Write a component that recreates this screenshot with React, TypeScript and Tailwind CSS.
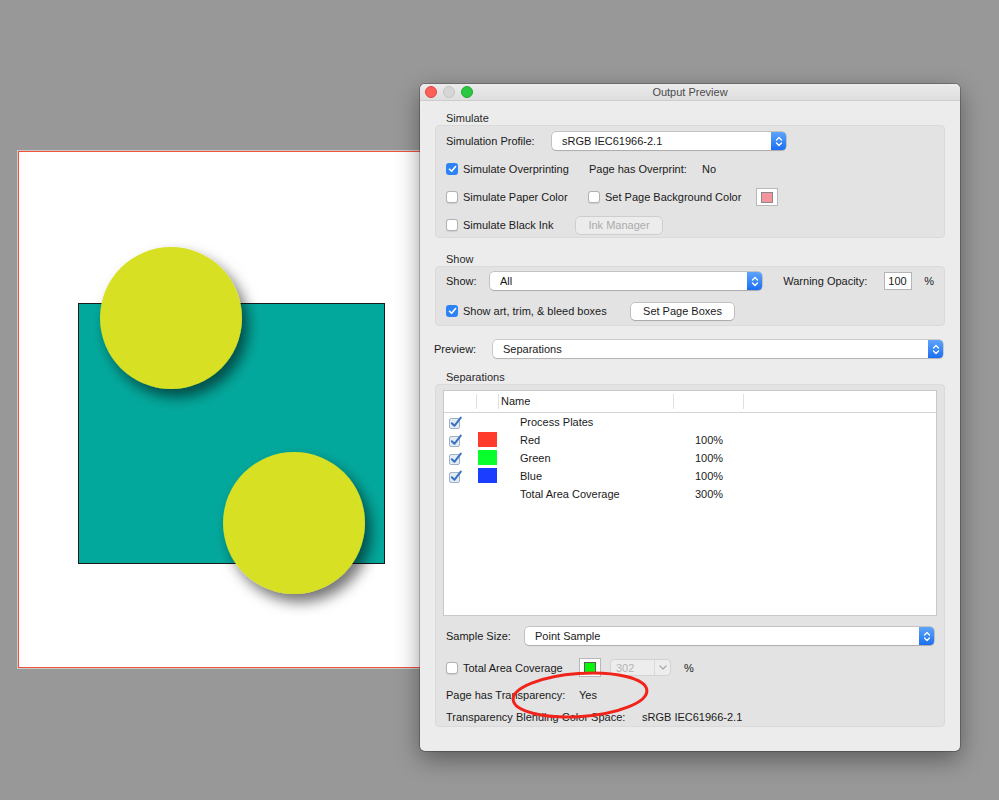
const Stepper = () => (
  <div className="flex w-[15px] shrink-0 items-center justify-center rounded-r-[4px] bg-linear-to-b from-[#5ea4fb] to-[#1a6ef3]">
    <svg width="8" height="11" viewBox="0 0 8 11" fill="none" stroke="white" strokeWidth="1.3" strokeLinecap="round" strokeLinejoin="round">
      <path d="M1.5 4 4 1.5 6.5 4M1.5 7 4 9.5 6.5 7" />
    </svg>
  </div>
);

function Select({ value, className = "" }: { value: string; className?: string }) {
  return (
    <div className={`flex h-[18px] items-stretch rounded-[4px] bg-white shadow-[0_0_0_0.5px_rgba(0,0,0,0.28),0_1px_1px_rgba(0,0,0,0.12)] ${className}`}>
      <span className="flex-1 pl-[10px] leading-[18px] text-[#1a1a1a]">{value}</span>
      <Stepper />
    </div>
  );
}

function Check({ on = false }: { on?: boolean }) {
  if (on)
    return (
      <span className="flex h-[12px] w-[12px] shrink-0 items-center justify-center rounded-[3px] bg-[#2d82f6]">
        <svg width="9" height="8" viewBox="0 0 9 8" fill="none" stroke="white" strokeWidth="1.6" strokeLinecap="round" strokeLinejoin="round">
          <path d="M1.5 4.2 3.6 6.3 7.6 1.5" />
        </svg>
      </span>
    );
  return <span className="h-[12px] w-[12px] shrink-0 rounded-[3px] border border-[#b2b2b2] bg-white shadow-[0_0.5px_1px_rgba(0,0,0,0.1)]" />;
}

function CheckLabel({ on, label, className = "" }: { on?: boolean; label: string; className?: string }) {
  return (
    <div className={`flex shrink-0 items-center gap-[5px] ${className}`}>
      <Check on={on} />
      <span>{label}</span>
    </div>
  );
}

function Button({ label, disabled, className = "" }: { label: string; disabled?: boolean; className?: string }) {
  return (
    <div
      className={`flex h-[17px] shrink-0 items-center justify-center rounded-[4px] ${
        disabled
          ? "bg-[#ececec] text-[#ababab] shadow-[0_0_0_0.5px_rgba(0,0,0,0.18)]"
          : "bg-white text-[#1a1a1a] shadow-[0_0_0_0.5px_rgba(0,0,0,0.3),0_1px_1px_rgba(0,0,0,0.12)]"
      } ${className}`}
    >
      {label}
    </div>
  );
}

function Swatch({ color, className = "" }: { color: string; className?: string }) {
  return (
    <div className={`flex shrink-0 items-center justify-center border border-[#b8b8b8] bg-white ${className}`}>
      <span className="h-[11px] w-[12px] border border-[#8a8a8a]" style={{ background: color }} />
    </div>
  );
}

const TableCheck = () => (
  <svg width="14" height="13" viewBox="0 0 14 13" fill="none">
    <rect x="0.5" y="2.5" width="10" height="10" rx="1.5" fill="#e3ebf4" stroke="#9fb2c8" />
    <path d="M2.8 7.2 5.4 9.8 11.8 1.6" stroke="#3a72bf" strokeWidth="2" strokeLinecap="round" strokeLinejoin="round" />
  </svg>
);

const rows = [
  { name: "Process Plates", check: true },
  { name: "Red", check: true, color: "#ff3b2c", pct: "100%" },
  { name: "Green", check: true, color: "#08ff2c", pct: "100%" },
  { name: "Blue", check: true, color: "#1a3dff", pct: "100%" },
  { name: "Total Area Coverage", pct: "300%" },
];

function Artwork() {
  return (
    <svg width="420" height="516" viewBox="0 0 420 516">
      <defs>
        <filter id="sh" x="-30%" y="-30%" width="170%" height="170%">
          <feDropShadow dx="6" dy="8" stdDeviation="7" floodColor="#000" floodOpacity="0.55" />
        </filter>
      </defs>
      <rect x="59.5" y="151.5" width="306" height="260" fill="#03a89c" stroke="#1a1a1a" />
      <circle cx="152" cy="166" r="71" fill="#d7e022" filter="url(#sh)" />
      <circle cx="275" cy="371" r="71" fill="#d7e022" filter="url(#sh)" />
    </svg>
  );
}

export default function App() {
  return (
    <div className="relative h-[800px] w-[999px] overflow-hidden bg-[#989898] font-['Liberation_Sans',Arial,sans-serif] text-[11px] leading-[14px] text-[#1a1a1a]">
      {/* page on the canvas */}
      <div className="absolute left-[17px] top-[150px] h-[519px] w-[440px] border border-[#c9c9c9] bg-white">
        <div className="h-full border border-[#f0533c]">
          <Artwork />
        </div>
      </div>

      {/* Output Preview window */}
      <div className="absolute left-[420px] top-[84px] flex h-[667px] w-[540px] flex-col overflow-hidden rounded-[5px] bg-[#ececec] shadow-[0_0_0_1px_rgba(0,0,0,0.22),0_8px_24px_rgba(0,0,0,0.4)]">
        <div className="relative flex h-[17px] shrink-0 items-center border-b border-[#cdcdcd] bg-linear-to-b from-[#ebebeb] to-[#dedede] pl-[5px]">
          <div className="flex gap-[6px]">
            <span className="h-[12px] w-[12px] rounded-full border border-[#e0443e] bg-[#fc5f57]" />
            <span className="h-[12px] w-[12px] rounded-full border border-[#c4c4c4] bg-[#d6d6d6]" />
            <span className="h-[12px] w-[12px] rounded-full border border-[#22a831] bg-[#2ac840]" />
          </div>
          <span className="absolute inset-x-0 text-center text-[#4a4a4a]">Output Preview</span>
        </div>

        <div className="flex flex-col px-[15px] pt-[10px]">
          {/* Simulate */}
          <div className="h-[14px] pl-[11px] text-[#2a2a2a]">Simulate</div>
          <div className="flex h-[113px] flex-col gap-[10px] rounded-[4px] border border-[#dadada] bg-[#e3e3e3] px-[10px] pt-[6px]">
            <div className="flex h-[18px] items-center">
              <span className="w-[106px] shrink-0">Simulation Profile:</span>
              <Select value="sRGB IEC61966-2.1" className="w-[234px]" />
            </div>
            <div className="flex h-[18px] items-center">
              <CheckLabel on label="Simulate Overprinting" className="w-[143px]" />
              <span className="w-[113px] shrink-0">Page has Overprint:</span>
              <span>No</span>
            </div>
            <div className="flex h-[18px] items-center">
              <CheckLabel label="Simulate Paper Color" className="w-[142px]" />
              <CheckLabel label="Set Page Background Color" className="w-[168px]" />
              <Swatch color="#f3959d" className="h-[18px] w-[22px]" />
            </div>
            <div className="flex h-[18px] items-center">
              <CheckLabel label="Simulate Black Ink" className="w-[130px]" />
              <Button label="Ink Manager" disabled className="h-[16px] w-[86px]" />
            </div>
          </div>

          {/* Show */}
          <div className="mt-[14px] h-[14px] pl-[11px] text-[#2a2a2a]">Show</div>
          <div className="flex h-[60px] flex-col gap-[12px] rounded-[4px] border border-[#dadada] bg-[#e3e3e3] px-[10px] pt-[5px]">
            <div className="flex h-[18px] items-center">
              <span className="w-[44px] shrink-0">Show:</span>
              <Select value="All" className="w-[273px]" />
              <span className="ml-[21px] w-[101px] shrink-0">Warning Opacity:</span>
              <div className="h-[18px] w-[28px] border border-[#b5b5b5] bg-white pl-[3px] leading-[16px]">100</div>
              <span className="ml-[12px]">%</span>
            </div>
            <div className="flex h-[18px] items-center">
              <CheckLabel on label="Show art, trim, & bleed boxes" className="w-[185px]" />
              <Button label="Set Page Boxes" className="w-[103px]" />
            </div>
          </div>

          {/* Preview */}
          <div className="-ml-px mt-[12px] flex h-[22px] items-center">
            <span className="w-[59px] shrink-0">Preview:</span>
            <Select value="Separations" className="h-[17px] w-[450px] shadow-[0_0_0_0.5px_rgba(0,0,0,0.3),0_0_0_3px_#93b3f2]" />
          </div>

          {/* Separations */}
          <div className="mt-[10px] h-[14px] pl-[11px] text-[#2a2a2a]">Separations</div>
          <div className="flex h-[343px] flex-col rounded-[4px] border border-[#dadada] bg-[#e3e3e3] pt-[5px]">
            <div className="mx-[7px] h-[226px] border border-[#c9c9c9] bg-white">
              <div className="grid h-[22px] grid-cols-[33px_22px_175px_70px_1fr] border-b border-[#d4d4d4]">
                <span className="my-[3px] border-r border-[#e0e0e0]" />
                <span className="my-[3px] border-r border-[#e0e0e0]" />
                <span className="my-[3px] border-r border-[#e0e0e0] pl-[2px] leading-[15px]">Name</span>
                <span className="my-[3px] border-r border-[#e0e0e0]" />
                <span />
              </div>
              {rows.map((r) => (
                <div key={r.name} className="grid h-[18px] grid-cols-[33px_22px_175px_70px_1fr] items-center">
                  <span className="flex pl-[5px]">{r.check && <TableCheck />}</span>
                  <span className="flex">
                    {r.color && <span className="ml-px h-[16px] w-[19px] border-b border-white" style={{ background: r.color }} />}
                  </span>
                  <span className="pl-[21px]">{r.name}</span>
                  <span className="pl-[21px]">{r.pct}</span>
                  <span />
                </div>
              ))}
            </div>

            <div className="mt-[11px] flex h-[18px] items-center px-[10px]">
              <span className="w-[79px] shrink-0">Sample Size:</span>
              <Select value="Point Sample" className="w-[409px]" />
            </div>
            <div className="mt-[13px] flex h-[19px] items-center px-[10px]">
              <CheckLabel label="Total Area Coverage" className="w-[133px]" />
              <div className="flex h-[19px] w-[22px] shrink-0 items-center justify-center border border-[#b8b8b8] bg-white">
                <span className="h-[12px] w-[12px] border border-[#5a5a5a] bg-[#09f50c]" />
              </div>
              <div className="ml-[9px] flex h-[17px] w-[61px] items-center rounded-[4px] border border-[#d2d2d2] bg-[#ededed] text-[#b4b4b4]">
                <span className="flex-1 pl-[5px]">302</span>
                <span className="flex h-full w-[16px] items-center justify-center border-l border-[#dadada]">
                  <svg width="8" height="5" viewBox="0 0 8 5" fill="none" stroke="#a8a8a8" strokeWidth="1.2" strokeLinecap="round" strokeLinejoin="round">
                    <path d="M1 1 4 4 7 1" />
                  </svg>
                </span>
              </div>
              <span className="ml-[13px]">%</span>
            </div>
            <div className="mt-[11px] flex h-[14px] items-center px-[10px]">
              <span className="w-[133px] shrink-0">Page has Transparency:</span>
              <span>Yes</span>
            </div>
            <div className="mt-[8px] flex h-[14px] items-center px-[10px]">
              <span className="w-[196px] shrink-0">Transparency Blending Color Space:</span>
              <span>sRGB IEC61966-2.1</span>
            </div>
          </div>
        </div>
      </div>

      {/* red annotation */}
      <svg className="pointer-events-none absolute left-[508px] top-[669px]" width="144" height="52" viewBox="0 0 144 52" fill="none">
        <ellipse cx="72" cy="26" rx="67" ry="21.5" stroke="#f0241a" strokeWidth="3" transform="rotate(-4 72 26)" />
      </svg>
    </div>
  );
}
